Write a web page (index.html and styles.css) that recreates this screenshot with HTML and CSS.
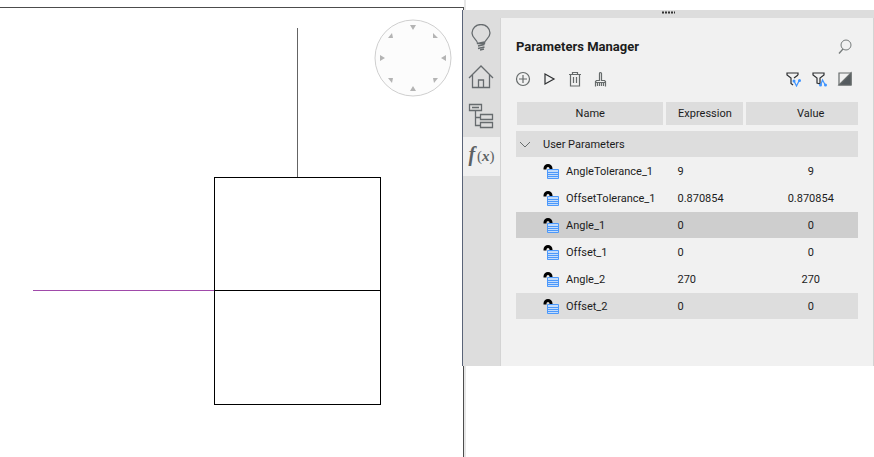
FILE: index.html
```html
<!DOCTYPE html>
<html lang="en">
<head>
<meta charset="utf-8">
<title>Parameters Manager</title>
<link rel="stylesheet" href="styles.css">
</head>
<body>
<svg class="defs" aria-hidden="true">
  <symbol id="unlocked" viewBox="0 0 18 18">
    <path d="M3 6.500V5.500a3 3 0 0 1 6 0V7.500" fill="none" stroke="#000" stroke-width="3"/>
    <path d="M5.500 6.500h11v9h-11z" fill="#c4dcfa" stroke="#4b98fb"/>
    <path d="M6 9.500h10M6 11.500h10M6 13.500h10" stroke="#4b98fb"/>
  </symbol>
</svg>

<section class="viewport" aria-label="Drawing">
  <div class="sheet">
    <svg class="drawing" width="460" height="440" viewBox="0 8 460 440" shape-rendering="crispEdges">
      <path d="M297.500 28V178" stroke="#646464"/>
      <path d="M33 290.500H214" stroke="#a04aaa"/>
      <path d="M214.500 177.500h166v227h-166zM214 290.500h167" fill="none" stroke="#000"/>
    </svg>
    <svg class="compass" width="78" height="78" viewBox="-39 -39 78 78">
      <circle r="38" fill="#fcfcfc" stroke="#cfcfcf"/>
      <g fill="#b4b4b4">
        <path d="M-3-33h6l-3 5zM-3 33h6l-3-5zM-33-3v6l5-3zM33-3v6l-5-3z"/>
        <path d="M-25-20l4-5 1 5zM20-25l5 5h-5zM-25 20h5l-1 5zM20 20h5l-4 5z"/>
      </g>
    </svg>
  </div>
</section>

<aside class="panel">
  <div class="grip"><svg width="13" height="3" viewBox="0 0 13 3"><path d="M0 1.500h13" stroke="#333" stroke-width="2" stroke-dasharray="2 1"/></svg></div>
  <nav class="tabs" aria-label="Panels">
    <button class="tab" aria-label="Tips"><svg width="26" height="28" viewBox="0 0 26 28"><path d="M9.500 19.500c0-4-5.500-5-5.500-10.500a9 8.500 0 0 1 18 0c0 5.500-5.500 6.500-5.500 10.500zM9.500 19.500l7-1.500M10 22l6.500-1.500M10 24.500l6.500-1.500M12 26l4-1"/></svg></button>
    <button class="tab" aria-label="Home"><svg width="26" height="28" viewBox="0 0 26 28"><path d="M1 15L13 3l12 12M4.500 12v12.500h17V12M10.500 24.500V17h5v7.500"/></svg></button>
    <button class="tab" aria-label="Structure"><svg width="26" height="28" viewBox="0 0 26 28"><path d="M1.500 2.500h12v6h-12zM4 5.500h7M7.500 8.500v15h5M7.500 15.500h5M12.500 12.500h12v5h-12zM12.500 20.500h12v5h-12z"/></svg></button>
    <button class="tab active" aria-label="Parameters"><span class="fx"><b>f</b><span>(<i>x</i>)</span></span></button>
  </nav>
  <main class="manager">
    <header class="heading">
      <h1>Parameters Manager</h1>
      <button class="tool" aria-label="Search"><svg width="16" height="16" viewBox="0 0 16 16" fill="none" stroke="#767b7b"><circle cx="9" cy="6" r="5"/><path d="M6 10l-4 4.500" stroke-width="1.300"/></svg></button>
    </header>
    <div class="toolbar">
      <button class="tool" aria-label="Add"><svg width="16" height="16" viewBox="0 0 16 16"><circle cx="8" cy="8" r="6.500"/><path d="M8 4v8M4 8h8"/></svg></button>
      <button class="tool" aria-label="Run"><svg class="dark" width="16" height="16" viewBox="0 0 16 16"><path d="M4 3v10l9-5z"/></svg></button>
      <button class="tool" aria-label="Delete"><svg width="16" height="16" viewBox="0 0 16 16"><path d="M2 3.500h12M5.500 3V1.500h5V3M3.500 4v11h9V4M6.500 6v6M9.500 6v6"/></svg></button>
      <button class="tool" aria-label="Purge"><svg width="16" height="16" viewBox="0 0 16 16"><path d="M2.500 15.500V10.500l1-1h3V2.500a1 1 0 0 1 2 0V9.500h3l1 1v5M2.500 11.500h10M4.500 12v3M6.500 12v3M8.500 12v3M10.500 12v3"/></svg></button>
      <span class="spacer"></span>
      <button class="tool" aria-label="Filter dimensional"><svg class="dark" width="16" height="16" viewBox="0 0 16 16"><path d="M13 4V2H2v2l4 3v5.500l2 1.500M13 4L9 7"/><path class="blue" d="M9 10l2.500 5 3-6"/><circle class="dot" cx="9" cy="10" r="1.500"/><circle class="dot" cx="14.500" cy="9.500" r="1.500"/></svg></button>
      <button class="tool" aria-label="Filter geometric"><svg class="dark" width="16" height="16" viewBox="0 0 16 16"><path d="M2 2h11v2L9 7v6L6 12V7L2 4z"/><path class="blue" d="M9.500 14.500l2-5.500 3 5.500"/><circle class="dot" cx="9.500" cy="14" r="1.500"/><circle class="dot" cx="14.500" cy="14" r="1.500"/></svg></button>
      <button class="tool" aria-label="Contrast"><svg width="16" height="16" viewBox="0 0 16 16"><path d="M2 2h12v12H2z"/><path d="M14 2v12H2z" fill="#555b5f"/></svg></button>
    </div>
    <table>
      <colgroup><col class="c-name"><col class="c-expr"><col class="c-value"></colgroup>
      <thead><tr><th>Name</th><th>Expression</th><th>Value</th></tr></thead>
      <tbody>
        <tr class="shade"><th class="group" colspan="3"><button aria-expanded="true"><svg width="12" height="8" viewBox="0 0 12 8"><path d="M1 1l5 5 5-5" fill="none" stroke="#686d6d"/></svg>User Parameters</button></th></tr>
        <tr><td><span class="param"><svg width="18" height="18"><use href="#unlocked"/></svg>AngleTolerance_1</span></td><td>9</td><td>9</td></tr>
        <tr><td><span class="param"><svg width="18" height="18"><use href="#unlocked"/></svg>OffsetTolerance_1</span></td><td>0.870854</td><td>0.870854</td></tr>
        <tr class="selected"><td><span class="param"><svg width="18" height="18"><use href="#unlocked"/></svg>Angle_1</span></td><td>0</td><td>0</td></tr>
        <tr><td><span class="param"><svg width="18" height="18"><use href="#unlocked"/></svg>Offset_1</span></td><td>0</td><td>0</td></tr>
        <tr><td><span class="param"><svg width="18" height="18"><use href="#unlocked"/></svg>Angle_2</span></td><td>270</td><td>270</td></tr>
        <tr class="shade"><td><span class="param"><svg width="18" height="18"><use href="#unlocked"/></svg>Offset_2</span></td><td>0</td><td>0</td></tr>
      </tbody>
    </table>
  </main>
</aside>
</body>
</html>
```
FILE: styles.css
```css
* { box-sizing: border-box; }

body {
  margin: 0;
  min-height: 100vh;
  display: grid;
  grid-template-columns: minmax(0, 462fr) minmax(0, 412fr);
  align-items: start;
  background: #fff;
  color: #1c1c1c;
  font: 11px/16px Roboto, "Liberation Sans", sans-serif;
}

button {
  margin: 0;
  padding: 0;
  border: 0;
  background: none;
  color: inherit;
  font: inherit;
}

svg { display: block; flex: none; }
.defs { position: absolute; width: 0; height: 0; }

/* Drawing area; its right edge runs under the panel */
.viewport {
  align-self: stretch;
  display: flex;
  margin-right: -4px;
  padding-top: 7px;
  border-right: 2px solid #e6e6e6;
}
.sheet {
  position: relative;
  flex: 1;
  border-top: 1px solid #4c4c4c;
  border-right: 1px solid #4c4c4c;
  overflow: hidden;
}
.compass { position: absolute; top: 11px; right: 11px; }

.panel {
  position: relative;
  display: grid;
  grid-template-columns: 38px minmax(0, 1fr);
  margin-top: 10px;
  border-left: 1px solid #5a6478;
  background: #ddd;
}
.grip {
  grid-column: 1 / -1;
  height: 8px;
  padding-top: 1px;
  display: flex;
  justify-content: center;
}

.tabs { border-right: 1px solid #d4d4d4; }
.tab {
  display: flex;
  align-items: center;
  justify-content: center;
  width: 36px;
  height: 39px;
}
.tab svg { fill: none; stroke: #666b6e; stroke-width: 1.3; }
.tab.active {
  width: 100%;
  margin-top: 2px;
  padding-bottom: 4px;
  background: #f0f0f0;
}
.fx {
  display: flex;
  align-items: baseline;
  gap: 2px;
  color: #5c6164;
  font: 15px/20px "Liberation Serif", serif;
}
.fx b { font-size: 20px; font-style: italic; }
.fx i { font-weight: 700; }

.manager {
  padding: 13px 15px 46px;
  border-right: 1px solid #d4d4d4;
  background: #f1f1f1;
}
.heading { display: flex; align-items: center; height: 32px; }
h1 { flex: 1; margin: 0; font-size: 13px; font-weight: 700; color: #1c1c1c; }

.toolbar { display: flex; height: 31px; margin: 0 0 8px -6px; }
.tool {
  display: flex;
  align-items: center;
  justify-content: center;
  width: 26px;
}
.spacer { flex: 1; }
.toolbar svg { fill: none; stroke: #666b6b; stroke-width: 1.2; }
.toolbar .dark { stroke: #2d2f31; }
.toolbar .blue { stroke: #3f94ff; }
.toolbar .dot { fill: #3f94ff; stroke: none; }

table {
  width: 100%;
  border-collapse: separate;
  border-spacing: 0;
  table-layout: fixed;
}
.c-name { width: 44%; }
.c-expr { width: 80px; }
th, td { padding: 0; font-weight: 400; background-clip: padding-box; }
thead th {
  height: 29px;
  padding-top: 1px;
  border-right: 3px solid transparent;
  border-bottom: 6px solid transparent;
  background-color: #ddd;
}
thead th:first-child { border-left: 1px solid transparent; }
thead th:last-child { border-right: 0; }
tbody th, td {
  height: 27px;
  padding-top: 2px;
  border-bottom: 1px solid transparent;
  text-align: left;
}
td:nth-child(2) { padding-left: 11px; }
td:nth-child(3), thead th:nth-child(3) { padding-left: 17px; text-align: center; }
.shade > * { background-color: #ddd; }
.selected > * { background-color: #cecece; }

.group button {
  display: flex;
  align-items: center;
  gap: 12px;
  padding-left: 3px;
}
.param {
  display: flex;
  align-items: center;
  gap: 6px;
  padding-left: 26px;
}
```
